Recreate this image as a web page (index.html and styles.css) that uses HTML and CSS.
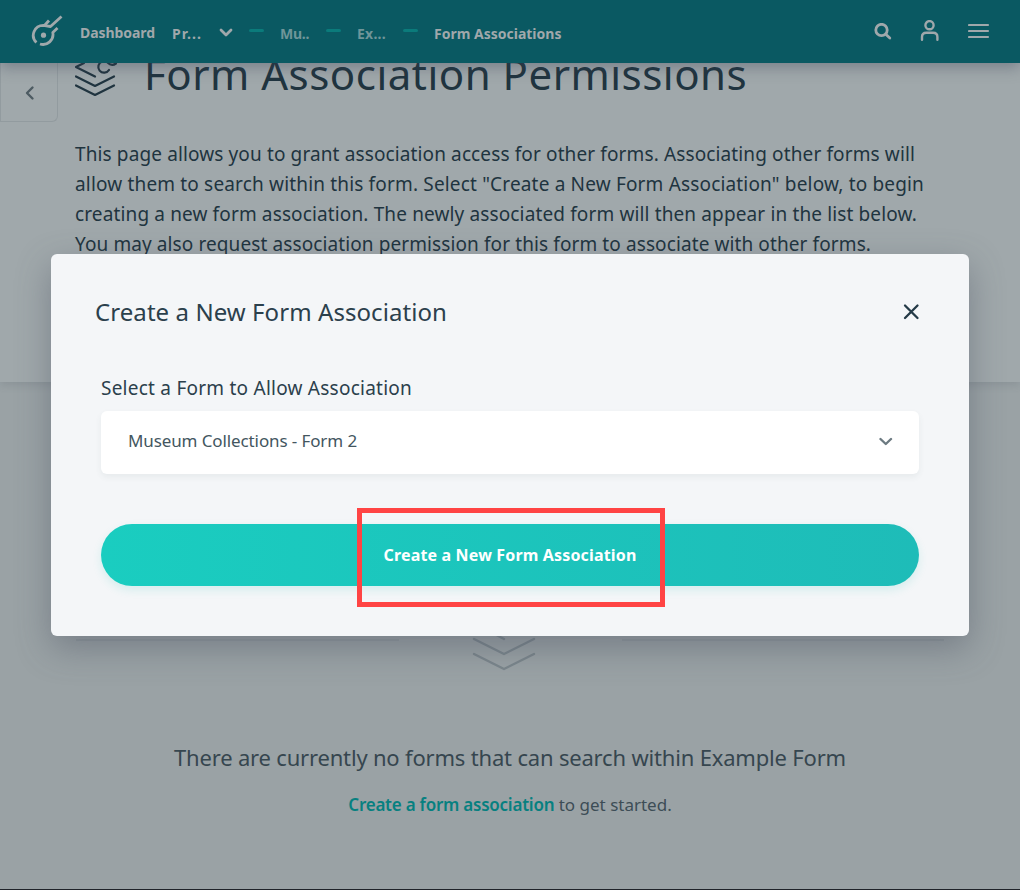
FILE: index.html
```html
<!DOCTYPE html>
<html lang="en">
<head>
<meta charset="utf-8">
<title>Form Association Permissions</title>
<link rel="stylesheet" href="styles.css">
</head>
<body>
<header class="topbar">
  <svg class="logo" width="34" height="34" viewBox="0 0 34 34" fill="none" stroke="#a0a8ab" stroke-width="2.800" stroke-linecap="butt" stroke-linejoin="round">
    <path d="M5.400 28.500A10 10 0 0 1 12.500 11.300L19.500 12.500L30.500 2.500M13.500 11.500L18 6.500M9 30A10 10 0 0 0 21.800 18.500L26.500 14"/>
    <circle cx="12.500" cy="21.200" r="2.600" fill="#a0a8ab" stroke="none"/>
  </svg>
  <nav class="crumbs">
    <span class="crumb c1">Dashboard</span>
    <span class="crumb c2">Pr...</span>
    <svg class="caret" width="14" height="10" viewBox="0 0 14 10" fill="none" stroke="#a0a8ab" stroke-width="2.800" stroke-linecap="round" stroke-linejoin="round"><path d="M2 2L7 7L12 2"/></svg>
    <i class="dash d1"></i>
    <span class="crumb dim c3">Mu..</span>
    <i class="dash d2"></i>
    <span class="crumb dim c4">Ex...</span>
    <i class="dash d3"></i>
    <span class="crumb c5">Form Associations</span>
  </nav>
  <div class="tools">
    <svg width="18" height="18" viewBox="0 0 18 18" fill="none" stroke="#a0a8ab" stroke-width="2.800" stroke-linecap="round"><circle cx="7.500" cy="7" r="5.700"/><path d="M12 11.500L15.800 15"/></svg>
    <svg class="user" width="20" height="22" viewBox="0 0 20 22" fill="none" stroke="#a0a8ab" stroke-width="2.400" stroke-linecap="round"><circle cx="9.500" cy="5.200" r="4.100"/><path d="M2 19.700V17Q2 12.700 6.300 12.700H13.100Q17.400 12.700 17.400 17V19.700"/></svg>
    <svg width="22" height="16" viewBox="0 0 22 16" stroke="#a0a8ab" stroke-width="2.200" stroke-linecap="round"><path d="M1 2H20M1 8H20M1 14H20"/></svg>
  </div>
</header>
<main>
  <section class="hero">
    <div class="back"><svg width="10" height="16" viewBox="0 0 10 16" fill="none" stroke="#4d5b62" stroke-width="2.400" stroke-linecap="round" stroke-linejoin="round"><path d="M7.500 2.500L2 8L7.500 13.500"/></svg></div>
    <div class="intro">
      <div class="heading">
        <svg class="layers" width="44" height="44" viewBox="0 0 44 44" fill="none" stroke="#20343f" stroke-width="2.200" stroke-linecap="round" stroke-linejoin="round"><path d="M9 10L1 14L20 23.500M1 23.500L20 33L39 23.500M1 32.500L20 42L39 32.500"/><path d="M34 17A5.800 5.800 0 1 1 27 8.500M32.500 9.500Q36.500 13.500 41 10.500"/></svg>
        <h1>Form Association Permissions</h1>
      </div>
      <p class="lead">
        <span class="l1">This page allows you to grant association access for other forms. Associating other forms will</span>
        <span class="l2">allow them to search within this form. Select "Create a New Form Association" below, to begin</span>
        <span class="l3">creating a new form association. The newly associated form will then appear in the list below.</span>
        <span class="l4">You may also request association permission for this form to associate with other forms.</span>
      </p>
    </div>
  </section>
  <section class="empty">
    <div class="rule"><i></i><svg width="66" height="66" viewBox="0 0 66 66" fill="none" stroke="#7b868c" stroke-width="2.400" stroke-linecap="round" stroke-linejoin="round"><path d="M12 10L2 15L32 31M2 31L32 46L62 31M2 46L32 61L62 46"/></svg><i></i></div>
    <h2>There are currently no forms that can search within Example Form</h2>
    <p class="start"><b>Create a form association</b> to get started.</p>
  </section>
</main>
<div class="modal" role="dialog">
  <div class="modal-head">
    <h3>Create a New Form Association</h3>
    <svg width="18" height="18" viewBox="0 0 18 18" stroke="#243a47" stroke-width="2.300" stroke-linecap="round"><path d="M3 2.500L15.500 15M15.500 2.500L3 15"/></svg>
  </div>
  <div class="field">
    <label>Select a Form to Allow Association</label>
    <div class="select"><span>Museum Collections - Form 2</span>
      <svg width="14" height="10" viewBox="0 0 14 10" fill="none" stroke="#6c7a81" stroke-width="2.400" stroke-linecap="round" stroke-linejoin="round"><path d="M1.500 3L6.800 8L12 3"/></svg></div>
  </div>
  <button class="submit">Create a New Form Association</button>
  <div class="marker"></div>
</div>
</body>
</html>
```
FILE: styles.css
```css
* { box-sizing: border-box; }
body { margin: 0; width: 1020px; height: 890px; overflow: hidden; position: relative; background: #9aa2a5; font-family: "Noto Sans", sans-serif; color: #20343f; }
h1, h2, h3, p { margin: 0; font-weight: 400; }
h1, h2, h3, label, span { white-space: nowrap; }
svg { display: block; flex: none; }
.topbar { position: relative; z-index: 2; display: flex; height: 63px; background: #0a5962; box-shadow: 0 4px 14px rgba(55, 65, 85, .4); }
.logo { margin: 14px 0 0 31px; }
.crumbs { display: flex; flex: 1; padding: 24px 0 0 15px; font-size: 14px; font-weight: 700; line-height: 20px; color: #a0a8ab; }
.crumb { flex: none; }
.c1 { width: 92px; margin-top: -1px; letter-spacing: -.06px; }
.c2 { width: 47px; letter-spacing: 1.1px; }
.dim { color: #6f9599; }
.dash { width: 15px; height: 3px; margin-top: 5px; border-radius: 2px; background: #0b7b7b; flex: none; }
.caret { margin-top: 4px; }
.d1 { margin-left: 16px; }
.c3 { margin-left: 16px; width: 46px; letter-spacing: -.25px; }
.c4 { margin-left: 16px; width: 46px; letter-spacing: .25px; }
.c5 { margin-left: 16px; }
.tools { display: flex; gap: 28px; padding: 23px 30px 0 0; }
.tools .user { margin-top: -3px; }
.hero { display: flex; height: 319px; background: #a0a8ab; position: relative; box-shadow: 0 3px 8px rgba(80, 92, 100, .2); }
.back { width: 58px; height: 59px; border: 1px solid #929b9f; border-top: 0; border-radius: 0 0 6px 0; padding: 22px 0 0 24px; flex: none; }
.intro { padding-left: 17px; }
.heading { display: flex; height: 76px; }
.layers { margin-top: -10px; margin-right: 25px; }
h1 { font-size: 42px; line-height: 50px; margin-top: -14px; letter-spacing: .5px; }
.lead { display: flex; flex-direction: column; align-items: flex-start; font-size: 19px; line-height: 30px; }
.l1 { letter-spacing: .122px; }
.l2 { letter-spacing: .168px; }
.l3 { letter-spacing: .132px; }
.l4 { letter-spacing: .101px; }
.empty { height: 508px; padding-top: 221px; border-bottom: 1px solid #20242a; }
.rule { display: flex; height: 120px; padding: 0 76px; }
.rule i { flex: 1; height: 2px; margin-top: 36px; background: #90999d; }
.rule svg { margin: 5px 84px 0 73px; }
h2 { font-size: 22px; line-height: 30px; margin-top: 19px; text-align: center; color: #36464f; letter-spacing: -.181px; }
.start { margin-top: 20px; font-size: 17px; line-height: 26px; text-align: center; color: #3d4d56; }
.start b { color: #078080; font-weight: 600; letter-spacing: -.234px; }
.modal { position: absolute; z-index: 3; left: 51px; top: 254px; width: 918px; height: 382px; padding: 40px 50px; border-radius: 6px; background: #f4f6f8; box-shadow: 0 12px 34px rgba(68, 76, 92, .42); }
.modal-head { display: flex; justify-content: space-between; align-items: center; height: 36px; margin-left: -6px; }
.modal-head svg { margin-right: -1px; }
h3 { margin-top: -2px; font-size: 24px; color: #2b404c; letter-spacing: .071px; }
.field { margin-top: 43px; }
label { display: inline-block; font-size: 19px; line-height: 30px; color: #2b404c; letter-spacing: .237px; }
.select { display: flex; justify-content: space-between; align-items: center; height: 63px; margin-top: 8px; padding: 0 26px 4px 27px; border-radius: 6px; background: #fff; font-size: 17px; color: #435660; letter-spacing: -.11px; box-shadow: 0 3px 6px rgba(60, 80, 90, .07); }
.submit { display: block; width: 100%; height: 62px; margin-top: 50px; padding: 0; border: 0; border-radius: 31px; background: linear-gradient(90deg, #1acdc0, #1ebcb8); color: #fff; font: 700 16px "Noto Sans", sans-serif; letter-spacing: .16px; box-shadow: 0 4px 10px rgba(26, 190, 180, .14); }
.marker { position: absolute; left: 306px; top: 254px; width: 308px; height: 99px; border: 5px solid #ff4444; }
```
